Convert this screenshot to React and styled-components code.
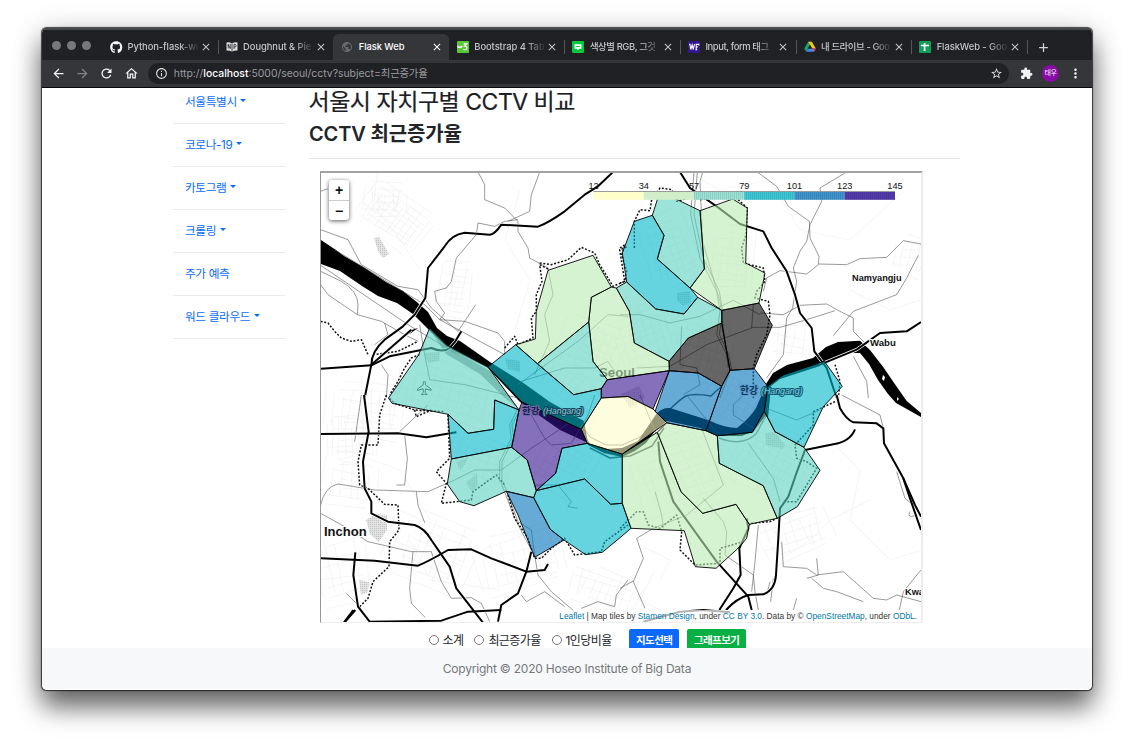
import React from "react";
import styled, { createGlobalStyle } from "styled-components";
import { FaGithub } from "react-icons/fa";
import {
  MdArrowBack,
  MdArrowForward,
  MdRefresh,
  MdOutlineHome,
  MdInfoOutline,
  MdStarBorder,
  MdExtension,
  MdMoreVert,
  MdPublic,
  MdClose,
  MdAdd,
} from "react-icons/md";

const Global = createGlobalStyle`
  * { box-sizing: border-box; }
  body { margin: 0; background: #fff; overflow: hidden; font-family: Inter, "Noto Sans CJK KR", sans-serif; }
  h1, h2 { margin: 0; }
`;

const Desktop = styled.div`
  height: 746px;
  padding: 28px 42px 56px;
  overflow: hidden;
`;

const Window = styled.div`
  height: 662px;
  display: flex;
  flex-direction: column;
  border-radius: 5px;
  overflow: hidden;
  background: #fff;
  box-shadow: 0 0 1px 0.5px rgba(0, 0, 0, 0.7), 0 17px 26px rgba(0, 0, 0, 0.56), 0 4px 32px rgba(0, 0, 0, 0.2);
`;

const TabStrip = styled.div`
  height: 32px;
  flex: none;
  display: flex;
  align-items: flex-end;
  background: #202124;
  border-top: 2px solid #46474a;
  padding-left: 10px;
`;

const Lights = styled.div`
  display: flex;
  gap: 6px;
  width: 50px;
  height: 30px;
  align-items: center;
  span {
    width: 9px;
    height: 9px;
    border-radius: 50%;
    background: #77787b;
  }
`;

const Tab = styled.div`
  position: relative;
  width: 115.6px;
  height: 26px;
  padding-left: 8px;
  display: flex;
  align-items: center;
  border-radius: 6px 6px 0 0;
  background: ${(p) => (p.$active ? "#35363a" : "transparent")};
  color: ${(p) => (p.$active ? "#fff" : "#c4c6c9")};
  svg {
    flex: none;
  }
  &::after {
    content: "";
    position: absolute;
    right: -1px;
    top: 6px;
    width: 1px;
    height: 14px;
    background: ${(p) => (p.$divider ? "#54565a" : "transparent")};
  }
`;

const Favicon = styled.span`
  width: 12px;
  height: 12px;
  flex: none;
  display: flex;
`;

const TabTitle = styled.span`
  width: 70px;
  flex: none;
  margin-left: 5.5px;
  white-space: nowrap;
  font-size: 9.4px;
  line-height: 16px;
  font-weight: 500;
  letter-spacing: ${(p) => (p.$korean ? "-0.4px" : "-0.06px")};
  mask-image: ${(p) => (p.$fade ? "linear-gradient(90deg, #000 74%, rgba(0, 0, 0, 0.15) 98%)" : "none")};
`;

const TabClose = styled(MdClose)`
  margin-left: 2px;
`;

const NewTab = styled.div`
  width: 34px;
  height: 26px;
  display: flex;
  align-items: center;
  justify-content: center;
  color: #d5d6d8;
`;

const Toolbar = styled.div`
  height: 28px;
  flex: none;
  display: flex;
  align-items: center;
  padding: 0 9px 0 8px;
  background: #35363a;
  border-bottom: 1.5px solid #08080a;
  color: #f1f1f2;
`;

const ToolIcon = styled.span`
  width: 24.2px;
  display: flex;
  padding-left: 1px;
  color: ${(p) => (p.$dim ? "#838488" : "#f4f4f5")};
`;

const Omnibox = styled.div`
  flex: 1;
  height: 21px;
  margin: 0 11px 0 1px;
  padding: 0 6px 0 7px;
  display: flex;
  align-items: center;
  border-radius: 11px;
  background: #202124;
  color: #dcdddf;
`;

const Url = styled.span`
  flex: 1;
  margin-left: 6px;
  font-size: 10.4px;
  line-height: 16px;
  color: #9a9ca0;
  b {
    font-weight: 500;
    color: #fff;
  }
  i {
    font-style: normal;
    letter-spacing: -0.2px;
  }
`;

const Avatar = styled.span`
  width: 17px;
  height: 17px;
  margin: 0 9px 0 9px;
  border-radius: 50%;
  background: #8a0aa5;
  font-size: 7px;
  line-height: 16px;
  text-align: center;
  letter-spacing: -0.4px;
`;

const Page = styled.div`
  height: 560px;
  flex: none;
  display: flex;
  gap: 24px;
  padding-left: 131px;
  overflow: hidden;
`;

const Nav = styled.nav`
  width: 112px;
  margin-top: -7.5px;
`;

const NavItem = styled.a`
  display: flex;
  align-items: center;
  gap: 3.5px;
  height: 43px;
  padding: 0 12px 2px;
  border-bottom: 1px solid #e9eaec;
  color: #0b6cfb;
  font-size: 11.7px;
  letter-spacing: -0.38px;
  white-space: nowrap;
`;

const Caret = styled.span`
  border: 3.7px solid transparent;
  border-top-color: currentColor;
  border-bottom: 0;
`;

const Main = styled.main`
  width: 651px;
  display: flex;
  flex-direction: column;
`;

const Title = styled.h1`
  height: 29px;
  margin-left: -0.5px;
  font-size: 23px;
  line-height: 28px;
  font-weight: 400;
  color: #1c2024;
  letter-spacing: -0.48px;
  -webkit-text-stroke: 0.2px #1c2024;
  white-space: nowrap;
`;

const Subtitle = styled.h2`
  height: 42px;
  flex: none;
  padding-top: 4px;
  font-size: 20px;
  line-height: 28px;
  font-weight: 600;
  color: #212529;
  letter-spacing: -0.15px;
  white-space: nowrap;
`;

const Rule = styled.div`
  height: 1px;
  flex: none;
  background: #e6e7e8;
`;

const MapFrame = styled.div`
  position: relative;
  width: 603px;
  height: 452px;
  flex: none;
  margin: 12px 0 0 11px;
  border: 1px solid #eee;
  border-top: 2px solid #a2a2a2;
  border-left: 1.5px solid #969696;
  border-right: 2px solid #ededed;
  svg.map {
    display: block;
  }
`;

const Zoom = styled.div`
  position: absolute;
  left: 8px;
  top: 7px;
  width: 20px;
  height: 40px;
  border-radius: 3px;
  background: #fff;
  box-shadow: 0 1px 4px rgba(0, 0, 0, 0.65);
  font-family: "Liberation Sans", sans-serif;
  font-size: 14px;
  font-weight: 700;
  line-height: 20px;
  text-align: center;
  color: #111;
  span {
    display: block;
    height: 20px;
  }
  span + span {
    border-top: 1px solid #ccc;
  }
`;

const Attribution = styled.div`
  position: absolute;
  right: 0;
  bottom: 0;
  height: 12px;
  padding: 0 4px;
  background: rgba(255, 255, 255, 0.7);
  font-family: "Liberation Sans", sans-serif;
  font-size: 8.3px;
  line-height: 12px;
  letter-spacing: 0.01px;
  color: #333;
  white-space: nowrap;
  a {
    color: #0078a8;
  }
`;

const Controls = styled.div`
  display: flex;
  align-items: flex-start;
  flex: none;
  padding-left: 119.5px;
  margin-top: 5.5px;
`;

const Option = styled.label`
  display: flex;
  align-items: center;
  height: 22px;
  margin-right: ${(p) => p.$gap}px;
  gap: 4px;
  font-size: 12px;
  letter-spacing: -0.6px;
  color: #212529;
  white-space: nowrap;
`;

const Radio = styled.span`
  width: 10px;
  height: 10px;
  border: 1px solid #777;
  border-radius: 50%;
  background: #fff;
`;

const Button = styled.button`
  width: ${(p) => p.$width}px;
  height: 23px;
  margin: 0 8px 0 0;
  padding: 0;
  border: 0;
  border-radius: 2px;
  background: ${(p) => p.$color};
  color: #fff;
  font: 600 10.5px/23px Inter, "Noto Sans CJK KR", sans-serif;
  letter-spacing: -0.6px;
  white-space: nowrap;
`;

const Footer = styled.footer`
  flex: 1;
  display: flex;
  justify-content: center;
  align-items: center;
  background: #f7f8fa;
  color: #75787b;
  font-size: 12px;
  letter-spacing: -0.22px;
  border-bottom: 1px solid #fff;
`;

const Box = ({ fill, children }) => (
  <svg width="12" height="12" viewBox="0 0 12 12">
    <rect width="12" height="12" rx="1" fill={fill} />
    {children}
  </svg>
);

const favicons = {
  github: <FaGithub size={12.5} color="#fff" />,
  book: (
    <svg width="12" height="12" viewBox="0 0 12 12">
      <path d="M.5 1.5Q3.5 1 6 2.4 8.5 1 11.5 1.5V9.5Q8.5 9.4 6 10.6 3.5 9.4.5 9.5Z" fill="#dcdcdc" />
      <path d="M2.2 3v4.5M4.2 3v5M2.2 4l2 3M6 3V10M8 8V3.4h1.2q1.6.5.6 2.2L8 6.2" fill="none" stroke="#202124" strokeWidth=".8" />
    </svg>
  ),
  globe: <MdPublic size={12} color="#686a6e" />,
  school: (
    <Box fill="#59c837">
      <path d="M.8 4.8q0 2 1.2 1.6t.9-1.2q0 1.6 1.1 1.2t1-1.6M6.6 3h3L7.7 5.2Q10.2 5.3 9.9 7.4 9.2 9.3 6.5 8.4" fill="none" stroke="#fff" strokeWidth="1.3" />
    </Box>
  ),
  chat: (
    <Box fill="#04c840">
      <path d="M2.5 3.2h7v4.6H7.2L6 9.3 4.8 7.8H2.5z" fill="#fff" />
      <path d="M4 5.5h4" stroke="#04c840" strokeWidth="1" />
    </Box>
  ),
  form: (
    <Box fill="#32168c">
      <path d="M1 3.2h1.6M1.8 3.2l1 5.3 1.3-4.6 1.2 4.6L6.5 3.2M8.2 8.7V3.4h2.7v1.2M7.4 8.7h1.8M8.2 6h1.8" fill="none" stroke="#fff" strokeWidth="1.1" />
    </Box>
  ),
  drive: (
    <svg width="12" height="12" viewBox="0 0 12 12">
      <path d="M4.2.8h3.6l-5.7 9.7L.2 7.6z" fill="#16a765" />
      <path d="M4.2.8h3.6l4 6.8H8.2z" fill="#fbc116" />
      <path d="M4 7.6h7.8l-1.8 3.2H2.1z" fill="#4285f4" />
      <path d="M8.2 7.6h3.6L10 10.8z" fill="#ea4335" />
      <path d="M6 4.4L7.9 7.6H4.1z" fill="#202124" />
    </svg>
  ),
  sheet: (
    <Box fill="#0f9d58">
      <path d="M2 4.5h8M5.6 2v8" stroke="#fff" strokeWidth="1.7" />
    </Box>
  ),
};

const tabs = [
  ["github", "Python-flask-we", true],
  ["book", "Doughnut & Pie", false],
  ["globe", "Flask Web", false],
  ["school", "Bootstrap 4 Tab", true],
  ["chat", "색상별 RGB, 그것", true, true],
  ["form", "Input, form 태그", true, true],
  ["drive", "내 드라이브 - Goo", true, true],
  ["sheet", "FlaskWeb - Goo", true],
];

const menu = [
  ["서울특별시", true],
  ["코로나-19", true],
  ["카토그램", true],
  ["크롤링", true],
  ["주가 예측", false],
  ["워드 클라우드", true],
];

const palette = {
  yellow: "#fefdc9",
  green: "#b9ebb2",
  teal: "#5ad2c0",
  cyan: "#00b8ca",
  blue: "#0071bb",
  purple: "#32118e",
  black: "#000",
};

const districts = [
  ["teal", "429.7,328 446.3,344.7 488,367 519,410 494.7,400 493.7,429.3 468,433.3 448,414.3 392,403.3 388.5,398 418.7,354.7"],
  ["cyan", "494.7,400 519,410 511.7,447.3 451.3,459 448,414.3 468,433.3 493.7,429.3"],
  ["teal", "451.3,459 511.7,447.3 527.3,460 536.3,490.7 533.7,497.7 506.3,491.3 474,505.7 459.7,501.7 447.3,484"],
  ["blue", "506.3,491.3 533.7,497.7 550.3,529.3 564,540 534.7,557.3 531.3,549 518,515"],
  ["purple", "519,410 522,402 581.3,429.3 587.3,443.3 562,448.3 555.7,473.3 536.3,490.7 527.3,460 511.7,447.3"],
  ["cyan", "587.3,443.3 622.3,454 622.3,503.3 610.7,504.3 584.7,479 536.3,490.7 555.7,473.3 562,448.3"],
  ["cyan", "536.3,490.7 584.7,479 610.7,504.3 622.3,503.3 631,528.3 620,537.7 602.3,552.3 585.7,554.7 564,540 550.3,529.3 533.7,497.7"],
  ["green", "622.3,454 657.3,432.3 681,491.7 702.7,513.3 736,504.3 749.3,524.3 746.7,538.3 737.3,549 716,568.3 695.3,566.7 684.3,530.7 631,528.3 622.3,503.3"],
  ["green", "657.3,432.3 666.7,422.7 706,430.7 717.3,435.7 719.3,463.3 763.3,485.7 777.3,518.3 749.3,524.3 736,504.3 702.7,513.3 681,491.7"],
  ["teal", "717.3,435.7 752.3,432.3 764.3,411 775,431.7 804,447.3 820,470.3 797.3,506.7 777.3,518.3 763.3,485.7 719.3,463.3"],
  ["cyan", "764.3,411 767.7,386.3 783,375 824.3,361.3 842.3,386.3 823.3,406.7 804,447.3 775,431.7"],
  ["blue", "730,370.3 754.3,368.7 767.7,386.3 764.3,411 752.3,432.3 717.3,435.7 706,430.7 721.7,386.3"],
  ["blue", "669.3,370.7 698.3,373 721.7,386.3 706,430.7 666.7,422.7 655,411.7"],
  ["black", "721.7,310.3 759,303 772.3,325.3 754.3,368.7 730,370.3 721.7,323"],
  ["black", "721.7,323 730,370.3 721.7,386.3 698.3,373 669.3,370.7 669,361.3 688.3,338"],
  ["green", "700,210.7 732.7,199 747.3,208 745.7,263 765,273 759,303 721.7,310.3 690,288 704.3,269"],
  ["teal", "660,191.3 700,210.7 704.3,269 690,288 657.3,259 664,235.3 652.3,215.3"],
  ["cyan", "634.3,221.3 652.3,215.3 664,235.3 657.3,259 690,288 697.7,297.3 684,314 655.7,309 626.7,282 622.3,253"],
  ["teal", "626.7,282 655.7,309 684,314 697.7,297.3 721.7,310.3 721.7,323 688.3,338 669,361.3 634.3,343 629.3,311.3 616.3,288"],
  ["green", "611.3,287 616.3,288 629.3,311.3 634.3,343 669,361.3 669.3,370.7 607.3,379.7 593,361.3 588.7,322 591.3,297.3"],
  ["green", "548,270.3 593,255.3 611.3,287 591.3,297.3 588.7,322 537.3,363.7 515.7,344.7 535.3,339 536.3,311.3"],
  ["teal", "588.7,322 593,361.3 607.3,379.7 601.3,388.7 573.7,394.7 537.3,363.7"],
  ["cyan", "515.7,344.7 537.3,363.7 573.7,394.7 601.3,388.7 601.3,398 581.3,429.3 522,402 488,367"],
  ["purple", "607.3,379.7 669.3,370.7 653,409 628,396.5 601.3,398 601.3,388.7"],
  ["yellow", "601.3,398 628,396.5 653,409 666.7,422.7 622.3,454 587.3,443.3 581.3,429.3"],
];

// Road network, one sheet per map quadrant, each in thirds of a pixel.
const sheets = [
  {
    x: 318,
    y: 168,
    major: [
      "M885 12L840 55 800 80 740 130Q690 165 660 176L550 170Q530 200 515 200L440 194Q400 200 380 235L330 300 322 390 290 440 255 475 200 515Q160 550 160 590L140 690",
      "M8 602L160 592 215 565 340 540Q375 555 395 540L412 520 430 490",
      "M160 590L280 485",
    ],
    minor: [
      "M480 12L500 50 500 95 560 120 600 160 600 190 630 240 635 270 690 300",
      "M665 12L640 80 635 130 570 160",
      "M600 155L560 160 530 175 480 165 475 200 415 270 400 340 385 360 350 370 355 400 380 435 365 455 440 460 540 495 560 520 560 560",
      "M8 185L90 215 130 290 240 355 300 365 340 420 420 490",
      "M8 310L70 340Q120 370 120 410L118 440 190 460 260 500 300 520",
      "M473 410L420 490",
      "M8 350L30 380 118 440",
      "M8 292L270 470 420 560",
      "M50 245L320 410 365 455 560 560",
      "M200 465L210 500 170 530M190 590L210 620 205 690",
      "M690 300L705 380 680 440 695 520 650 620",
      "M305 470L320 560 335 635 440 650 600 690",
      "M600 650L780 520 870 440 930 445",
      "M610 640L740 600 830 600 870 580 890 610",
      "M8 70L30 62",
    ],
    dotted: [
      "M8 460L30 465 50 490 70 510 100 520 130 515 150 560",
      "M305 560L280 570 260 600 240 640 215 680",
      "M690 303L665 290 672 340 655 380 655 430 640 450 645 510 600 530 590 505 560 540",
      "M665 285L700 290 750 275 790 238 830 255 845 290 870 330 885 355 920 340 905 245 930 235",
      "M165 560L240 550 300 520",
    ],
  },
  {
    x: 620,
    y: 168,
    major: [
      "M180 12L210 60 290 115 360 168 430 190 455 240 500 310 525 380 540 435 575 480 583 550 620 600 650 690",
      "M903 462L860 490 780 495 710 545 600 590",
    ],
    minor: [
      "M412 12L470 55 505 115 568 160 570 210 597 265 595 290 560 318 480 308 440 330 430 370",
      "M680 12L600 60 605 100 570 170 560 220 540 250 520 300 530 340 518 420 500 450 490 560 440 630",
      "M597 288L680 290 720 272 800 268 850 218 903 228",
      "M895 262L860 330 830 380 700 430 640 503",
      "M420 435L490 440 540 412 620 408 660 430 700 450 700 490 740 530",
      "M0 440L60 440 150 465 240 445 340 397 420 440",
      "M50 600L150 595 260 530 400 478 480 478 560 455 645 428",
      "M222 12L212 140 240 270 290 370 300 430 290 500 320 560 330 610 300 690",
      "M232 12L222 140 250 270 298 370 308 430 298 500 326 560 336 610",
      "M248 12L240 40 248 220 300 400 325 600",
      "M185 475L180 590 230 600 240 650 190 680",
      "M400 410L395 480",
      "M700 565L740 640 745 690",
    ],
    dotted: [
      "M43 240L43 160 60 125 90 128 95 95 120 60 155 65 170 100 200 92 225 85 240 95 300 85 338 80 382 120 378 200 365 240 370 285 430 300 435 340 410 370 405 390 445 400 450 440 440 500 410 560 400 600 400 690",
      "M645 590L660 640 655 690",
      "M0 240L15 230 5 260 20 310 15 340 0 345",
    ],
  },
  {
    x: 318,
    y: 395,
    major: [
      "M138 0L152 110 135 200 140 280 160 320 160 355 210 380 290 390Q320 400 340 435L395 515 415 580 495 683",
      "M8 117L240 115 325 127 415 112",
      "M8 490L170 497 300 512Q330 500 390 465L460 463 520 490 625 530 680 525 690 507",
      "M112 472L106 540 120 635 155 680 370 677 450 650 550 645",
      "M640 470L625 530 600 595 550 630 540 680",
      "M112 645L80 682",
      "M106 645L78 682",
    ],
    minor: [
      "M8 330Q20 275 60 267L170 285 330 290 410 255 470 225 550 225 640 160 760 80",
      "M235 270L260 270 268 190 260 120M245 110L330 30",
      "M295 290L300 330 320 383",
      "M8 355L80 395 150 440 280 470 340 470 370 560 400 610 460 608 490 625 515 680",
      "M285 470L275 580 280 625 322 668",
      "M85 595L130 640",
      "M130 0L110 140",
      "M545 260L545 200 580 130 575 90 600 40",
      "M552 260L552 200 587 130 582 90 608 40",
      "M548 260L590 370 640 465",
      "M555 260L600 380 640 405 650 480 660 540 700 590 770 650",
      "M610 600L625 620 680 590 740 635",
      "M790 640L840 620 890 635 895 600 930 555",
      "M640 60L680 130 700 150 760 145 810 60 830 0",
      "M650 270L720 270 760 320 750 335 780 340",
    ],
    dotted: [
      "M205 0L185 60 180 150 130 150 120 200 125 270 150 280 200 328 240 330 243 405 215 440 213 515 165 560 150 610 120 640",
      "M390 60L395 190 355 230 385 265 370 325 460 315 465 290 535 240 560 270",
      "M215 10L230 25 290 45 380 50",
      "M290 45L295 65 340 45",
      "M570 300L590 370 630 430 650 490 670 490 700 460 740 430 770 480 850 470 860 440 930 390",
    ],
  },
  {
    x: 620,
    y: 395,
    major: [
      "M705 103Q690 140 640 148L555 165Q530 230 505 305L480 340 475 430 468 540Q465 585 430 598L385 600Q350 610 318 645",
      "M115 140L120 200 160 320 290 500 385 605 395 645",
      "M380 370L385 400 358 460 362 540 340 580 298 645",
      "M70 680L180 650 250 645 330 652",
      "M650 0L660 40Q680 75 700 82L770 85 790 100 792 145 850 250 870 310 903 405",
      "M850 250L885 330 903 365",
    ],
    minor: [
      "M105 290L125 360 130 400",
      "M250 310L310 380 320 410 315 480 400 540 405 590 415 645",
      "M245 100L310 270 200 360 100 400 50 430 70 490 40 560 75 640",
      "M0 580L40 558",
      "M385 145L460 250 480 320",
      "M415 390L405 500 395 590",
      "M485 440L490 515 560 520 590 540 670 530 760 610 800 615 830 600 903 620",
      "M560 550L595 540 590 490",
      "M575 550L610 580 650 590 730 620",
      "M903 525L850 590 838 645",
      "M665 0L780 60 790 100",
      "M370 0L340 30 340 60 400 100",
      "M440 40L530 75 600 45",
      "M830 230L855 310 880 330",
      "M870 350Q860 370 885 362",
      "M450 560L440 600M520 645L530 610M460 550L452 620",
      "M60 0L110 120M200 0L280 100",
    ],
    dotted: [
      "M0 400L50 350 70 350 85 390 120 400 170 360 185 410 180 465 225 510 300 505 300 460 370 440 390 385 450 380 470 370",
      "M645 20L580 50 580 90 525 150 530 190 560 200 590 220 530 320 490 320",
    ],
  },
];

const noise = (n) => {
  const v = Math.sin(n * 127.1) * 43758.5453;
  return v - Math.floor(v);
};

// Residential street grids: centre, columns, rows, block size and angle.
const grids = [
  [395, 218, 12, 8, 6, 35], [385, 200, 6, 5, 7, 5], [455, 290, 5, 9, 6, 8], [352, 440, 8, 8, 6, -3],
  [365, 410, 9, 6, 9, 5], [350, 480, 6, 6, 9, 8], [340, 570, 6, 7, 10, -12], [430, 550, 9, 7, 10, 22],
  [520, 560, 9, 6, 10, -15], [480, 460, 8, 6, 8, 20], [560, 465, 8, 7, 8, 30], [590, 350, 8, 7, 8, 20],
  [640, 340, 8, 8, 8, -18], [700, 350, 9, 9, 7, 12], [735, 400, 9, 7, 8, 28], [680, 475, 10, 9, 9, -20],
  [770, 460, 9, 9, 8, 28], [730, 260, 6, 9, 8, 5], [670, 250, 6, 9, 8, -20], [910, 255, 4, 5, 8, 12],
  [795, 535, 8, 5, 9, -20], [605, 590, 9, 5, 8, 20], [450, 390, 12, 6, 9, 15], [570, 390, 9, 5, 8, 40],
  [790, 340, 5, 5, 9, 8],
];

const gridPath = (cols, rows, size, seed) => {
  let d = "";
  for (let i = 0; i <= cols; i++) {
    const a = noise(seed + i) * rows * 0.4;
    d += `M${(i - cols / 2) * size} ${(a - rows / 2) * size}l${(noise(seed + i * 3) - 0.5) * size} ${(rows - a) * size * 0.8}`;
  }
  for (let i = 0; i <= rows; i++) {
    const a = noise(seed + i * 7) * cols * 0.4;
    d += `M${(a - cols / 2) * size} ${(i - rows / 2) * size}l${(cols - a) * size * 0.85} ${(noise(seed + i * 5) - 0.5) * size}`;
  }
  return d;
};

const parks = [
  "374,238 379,237 385,247 389,254 383,258 378,251",
  "366,520 376,514 387,515 387,530 379,542 370,534",
  "359,580 369,582 368,592 361,595",
  "677,293 690,291 691,302 683,306 677,300",
  "765,433 775,432 785,445 783,449 766,445",
  "424,353 440,352 439,361 428,363",
  "466,483 477,473 478,485 472,492",
  "456,462 468,458 464,466 460,470",
  "505,358 520,361 520,372 508,369",
  "621,394 639,386 645,398 630,408",
];

const legendFill = ["#ffffcc", "#d0efc8", "#9de3d7", "#3cc8d5", "#3f94cd", "#533bac"];
const legendTicks = [12, 34, 57, 79, 101, 123, 145];

const MapLabel = styled.text`
  font-family: "Liberation Sans", "Noto Sans CJK KR", sans-serif;
  font-weight: ${(p) => (p.$light ? 400 : 700)};
  font-size: ${(p) => p.$size}px;
  font-style: ${(p) => (p.$italic ? "italic" : "normal")};
  fill: ${(p) => p.$fill || "#111"};
  stroke: ${(p) => p.$halo || "#fff"};
  stroke-width: ${(p) => (p.$halo === "none" ? 0 : 2)}px;
  paint-order: stroke;
`;

const SeoulMap = () => (
  <svg className="map" width="100%" height="100%" viewBox="321 173 600 449" preserveAspectRatio="none">
    <defs>
      <pattern id="dots" width="2" height="2" patternUnits="userSpaceOnUse">
        <rect width="2" height="2" fill="#e2e2e2" />
        <rect width="1" height="1" fill="#c4c4c4" />
      </pattern>
      <pattern id="stripe" width="2" height="8" patternUnits="userSpaceOnUse">
        <rect width="1" height="8" fill="#000" opacity="0.1" />
      </pattern>
    </defs>
    <rect x="321" y="173" width="600" height="449" fill="#fff" />
    <g fill="none" stroke="#efefef" strokeWidth="0.6">
      {grids.map(([x, y, c, r, s, a], i) => (
        <path key={i} d={gridPath(c, r, s, i * 11 + 1)} transform={`translate(${x} ${y}) rotate(${a})`} />
      ))}
      <path d="M377 173L374 205 400 240 420 270M690 173L720 190 770 180 800 230 850 240 905 190M520 190L505 240 530 280 515 330M850 290L890 310 921 300M830 440L860 470 850 520 890 560 921 550M655 570L640 600 680 620M410 540L430 580 500 590M345 450L400 470 430 520M780 560L810 540 830 520 870 500M640 545L670 560 660 580" />
    </g>
    {parks.map((p) => (
      <polygon key={p} points={p} fill="url(#dots)" />
    ))}
    <path d="M430 330L450 348 490 371 512 400 519 409 505 398 480 374 446 354Z" fill="#000" opacity="0.35" />
    <g fill="#000">
      <path d="M321 240L336 250 344 256 365 268 386 282 403 291 418 303 428 312 437 328 447 336 460 341 490 362 522 382 550 402 584 421 588 443 560 430 520 402 488 368 447 347 430 331 413 314 397 303 378 296 362 286 340 271 321 264Z" />
      <path d="M408 331L418 328 411 333 402 337Z" />
      <path d="M766 384L773 373 787 365 813 358 826 347 838 342 860 340.7 870 350 883 366.7 896.7 386.7 906.7 401 921 413V417L896 403 888 394 878 380 869 364 860 353 850 353 823 365 780 379 771 386 768 418 762 412Z" />
      <path d="M657 413Q665 406 673 409L708 420Q725 428 737 428 750 418 756 408L763 392 771 386 768 412 754 431 742 436 717 436 700 428 667 421 655 431 646 443 635 451 622 457 604 453 588 445 582 430 590 444 606 449 622 448 638 441Z" />
    </g>
    <path d="M883 375l2 2-1 4-2-2zM897 397l2 2-2 2z" fill="#fff" />
    <g fill="none" stroke="#000" strokeWidth="1.4" strokeLinejoin="round">
      <path d="M666 413Q680 399 686 396 694 393 711 396 716 391 721 387M664 428L652 446 630 456 610 458 590 448" opacity="0.75" />
      <path d="M583 427L590 437 606 445 622 445 640 437 660 419" strokeWidth="0.9" opacity="0.6" />
      <path d="M719 438Q742 447 756 434L768 412" opacity="0.5" />
    </g>
    <g fill="none" stroke="#111" strokeLinejoin="round">
      {sheets.map((s) => (
        <g key={`${s.x}-${s.y}`} transform={`translate(${s.x} ${s.y}) scale(0.33333)`}>
          {s.minor.map((d) => (
            <path key={d} d={d} stroke="#555" strokeWidth="1.8" />
          ))}
          {s.dotted.map((d) => (
            <path key={d} d={d} strokeWidth="4.5" strokeDasharray="6 5" />
          ))}
          {s.major.map((d) => (
            <path key={d} d={d} stroke="#fff" strokeWidth="10" />
          ))}
          {s.major.map((d) => (
            <path key={d} d={d} stroke="#000" strokeWidth="6" />
          ))}
        </g>
      ))}
    </g>
    <path d="M424.3 381q1.2 0 1.2 4l5.5 4v1.4l-5.5-1.6-.4 3.6 1.8 1.5v1l-2.6-.7-2.6.7v-1l1.8-1.5-.4-3.6-5.5 1.6V389l5.5-4q0-4 1.2-4z" fill="#fff" stroke="#333" strokeWidth="1" />
    <MapLabel x="599" y="377" $size="13.2" $fill="#222" $halo="none">Seoul</MapLabel>
    <g stroke="#000" strokeWidth="0.9" fillOpacity="0.6">
      {districts.map(([tone, points]) => (
        <polygon key={points} points={points} fill={palette[tone]} />
      ))}
    </g>
    <MapLabel x="522" y="414" $size="9.4" $fill="#1b1850" $halo="#6f6aa8">한강</MapLabel>
    <MapLabel x="543" y="413.5" $size="8.6" $italic $light $fill="#8fc3d0" $halo="#12465e">(Hangang)</MapLabel>
    <MapLabel x="740" y="394" $size="9.8" $fill="#0c3a5e" $halo="#5b9dc9">한강</MapLabel>
    <MapLabel x="761" y="394" $size="8.8" $italic $light $fill="#83cfe0" $halo="#0e5c72">(Hangang)</MapLabel>
    <MapLabel x="324" y="536" $size="13">Inchon</MapLabel>
    <MapLabel x="852" y="281" $size="9.2">Namyangju</MapLabel>
    <MapLabel x="870" y="346" $size="9.6">Wabu</MapLabel>
    <MapLabel x="905" y="595" $size="9.2">Kwa</MapLabel>
    <rect x="593.5" y="191" width="301.5" height="1.5" fill="#9a9a9a" />
    {legendFill.map((fill, i) => (
      <rect key={fill} x={593.5 + i * 50.25} y="192" width="50.25" height="7.8" fill={fill} />
    ))}
    <rect x="694" y="192" width="201" height="7.8" fill="url(#stripe)" />
    {legendTicks.map((t, i) => (
      <MapLabel key={t} x={593.5 + i * 50.25} y="189" textAnchor="middle" $size="9.2" $light $halo="none">
        {t}
      </MapLabel>
    ))}
  </svg>
);

export default function App() {
  return (
    <Desktop>
      <Global />
      <Window>
        <TabStrip>
          <Lights>
            <span />
            <span />
            <span />
          </Lights>
          {tabs.map(([icon, title, divider, korean], i) => (
            <Tab key={title} $active={i === 2} $divider={divider}>
              <Favicon>{favicons[icon]}</Favicon>
              <TabTitle $korean={korean} $fade={i !== 2}>{title}</TabTitle>
              <TabClose size={12} />
            </Tab>
          ))}
          <NewTab>
            <MdAdd size={15} />
          </NewTab>
        </TabStrip>
        <Toolbar>
          <ToolIcon><MdArrowBack size={15} /></ToolIcon>
          <ToolIcon $dim><MdArrowForward size={15} /></ToolIcon>
          <ToolIcon><MdRefresh size={15} /></ToolIcon>
          <ToolIcon><MdOutlineHome size={15} /></ToolIcon>
          <Omnibox>
            <MdInfoOutline size={13} />
            <Url>
              http://<b>localhost</b>:5000/seoul/cctv?subject=<i>최근증가율</i>
            </Url>
            <MdStarBorder size={13} />
          </Omnibox>
          <MdExtension size={13} />
          <Avatar>태우</Avatar>
          <MdMoreVert size={15} />
        </Toolbar>
        <Page>
          <Nav>
            {menu.map(([label, dropdown]) => (
              <NavItem key={label}>
                {label}
                {dropdown && <Caret />}
              </NavItem>
            ))}
          </Nav>
          <Main>
            <Title>서울시 자치구별 CCTV 비교</Title>
            <Subtitle>CCTV 최근증가율</Subtitle>
            <Rule />
            <MapFrame>
              <SeoulMap />
              <Zoom>
                <span>+</span>
                <span>−</span>
              </Zoom>
              <Attribution>
                <a>Leaflet</a> | Map tiles by <a>Stamen Design</a>, under <a>CC BY 3.0</a>. Data by © <a>OpenStreetMap</a>, under <a>ODbL</a>.
              </Attribution>
            </MapFrame>
            <Controls>
              <Option $gap={11}><Radio />소계</Option>
              <Option $gap={11}><Radio />최근증가율</Option>
              <Option $gap={17.5}><Radio />1인당비율</Option>
              <Button $width={50} $color="#0d69fb">지도선택</Button>
              <Button $width={59} $color="#08b044">그래프보기</Button>
            </Controls>
          </Main>
        </Page>
        <Footer>Copyright © 2020 Hoseo Institute of Big Data</Footer>
      </Window>
    </Desktop>
  );
}
